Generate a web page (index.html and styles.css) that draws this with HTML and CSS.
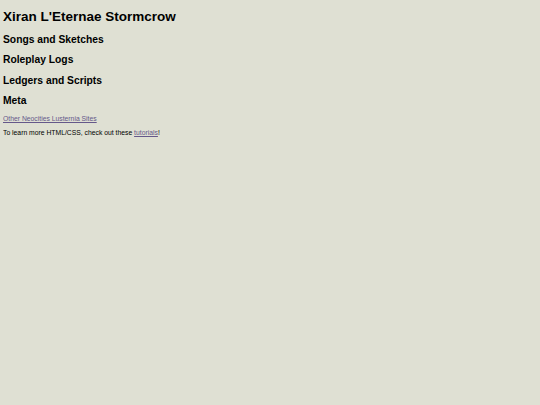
FILE: index.html
```html
<!DOCTYPE html>
<html>
<head>
<meta charset="utf-8">
<link rel="stylesheet" href="styles.css">
</head>
<body>
<h1 class="title">Xiran L'Eternae Stormcrow</h1>
<h2 class="section">Songs and Sketches</h2>
<h2 class="section">Roleplay Logs</h2>
<h2 class="section">Ledgers and Scripts</h2>
<h2 class="section">Meta</h2>
<p class="note"><a class="link" href="#">Other Neocities Lusternia Sites</a></p>
<p class="note">To learn more HTML/CSS, check out these <a class="link" href="#">tutorials</a>!</p>
</body>
</html>
```
FILE: styles.css
```css
html, body {
  background: #dfe0d3;
}
body {
  margin: 3px;
  padding-top: 6px;
  font-family: "Liberation Sans", Arial, sans-serif;
  color: #000;
}
.title {
  font-size: 13.5px;
  line-height: 16px;
  margin: 0 0 8px;
}
.section {
  font-size: 10.3px;
  line-height: 13px;
  margin: 7.3px 0;
}
.note {
  font-size: 6.8px;
  line-height: 8px;
  margin: 6px 0;
}
.note:first-of-type {
  margin-top: 8px;
}
.link {
  color: #65588a;
}
```
